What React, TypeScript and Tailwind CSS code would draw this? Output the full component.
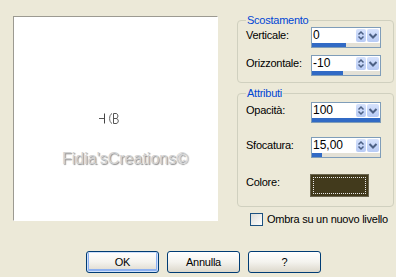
import React from "react";

function SpinBox({ value, pct }: { value: string; pct: number }) {
  return (
    <div className="w-[70px] h-[21px] border border-[#7f9db9] bg-white flex flex-col">
      <div className="flex h-[14px] items-start">
        <div className="flex-1 pl-[1px] pt-[1px] text-[12px] leading-[13px] tracking-[0px]">{value}</div>
        <div className="mt-[1px] w-[10px] h-[13px] rounded-[2px] bg-linear-to-b from-[#d6e2fc] to-[#b8cbf5]">
          <svg width="10" height="13" viewBox="0 0 10 13">
            <path d="M2.5 5.5 L5 3 L7.5 5.5" fill="none" stroke="#4d6185" strokeWidth="1.5" />
            <path d="M2.5 7.5 L5 10 L7.5 7.5" fill="none" stroke="#4d6185" strokeWidth="1.5" />
          </svg>
        </div>
        <div className="mt-[1px] ml-[1px] mr-[1px] w-[12px] h-[13px] rounded-[2px] bg-linear-to-b from-[#d6e2fc] to-[#b8cbf5]">
          <svg width="12" height="13" viewBox="0 0 12 13">
            <path d="M2.5 5 L6 8.5 L9.5 5" fill="none" stroke="#4d6185" strokeWidth="2" />
          </svg>
        </div>
      </div>
      <div className="mt-[1px] h-[4px] bg-[#e4e1d6] flex">
        <div className="h-full bg-[#316ac5]" style={{ width: `${pct}%` }} />
      </div>
    </div>
  );
}

function Row({ label, children, className = "" }: { label: string; children: React.ReactNode; className?: string }) {
  return (
    <div className={"flex items-start " + className}>
      <div className="w-[65px] pt-[2px]">{label}</div>
      {children}
    </div>
  );
}

function Group({ title, children, className = "" }: { title: string; children: React.ReactNode; className?: string }) {
  return (
    <div className={"rounded-[4px] border border-[#d0d0bf] pl-[8px] pr-[11px] " + className}>
      <div className="-mt-[7px] h-[13px] w-fit px-[1px] bg-[#ece9d8] text-[#0046d5]">{title}</div>
      {children}
    </div>
  );
}

function Btn({ label, def = false }: { label: string; def?: boolean }) {
  return (
    <button
      className={
        "w-[73px] h-[22px] rounded-[3px] border border-[#003c74] bg-linear-to-b from-white via-[#f4f3ee] to-[#dcd8cc] text-black " +
        (def ? "shadow-[inset_0_0_0_1px_#cee0fb,inset_0_-1px_0_2px_#8cb0f0]" : "")
      }
    >
      {label}
    </button>
  );
}

export default function App() {
  return (
    <div className="w-[396px] h-[277px] overflow-hidden bg-[#ece9d8] text-black text-[11px] leading-[13px] tracking-[-0.25px] font-['Liberation_Sans',Arial,sans-serif]">
      <div className="flex items-start pt-[16px] pl-[13px]">
        <div className="w-[205px] h-[205px] border-t border-l border-[#9c9a91] border-r border-b border-r-white border-b-white bg-white flex flex-col items-center">
          <svg className="mt-[96px] mr-[11px]" width="23" height="11" viewBox="0 0 23 11">
            <path d="M0 5.5 H5" stroke="#555" strokeWidth="1" />
            <path d="M5.5 0.5 V10.5" stroke="#444" strokeWidth="1" />
            <path d="M13 0.5 C9.8 2 9.8 9 13 10.5" fill="none" stroke="#666" strokeWidth="1" />
            <path d="M14.5 0.5 V10.5 M14.5 0.5 H17 C19.5 0.5 19.5 5.5 17 5.5 H14.5 M17 5.5 C20 5.5 20 10.5 17 10.5 H14.5" fill="none" stroke="#555" strokeWidth="1" />
          </svg>
          <div className="mt-[26px] ml-[19px] text-[16px] leading-[18px] tracking-[0px] text-[#d2d2d2] [text-shadow:1px_1px_1px_#8c8c8c]">
            Fidia'sCreations©
          </div>
        </div>
        <div className="ml-[19px] w-[157px] flex flex-col">
          <Group title="Scostamento" className="mt-[4px] pb-[6px]">
            <Row label="Verticale:">
              <SpinBox value="0" pct={50} />
            </Row>
            <Row label="Orizzontale:" className="mt-[7px]">
              <SpinBox value="-10" pct={45} />
            </Row>
          </Group>
          <Group title="Attributi" className="mt-[10px] pb-[9px]">
            <Row label="Opacità:" className="mt-[2px]">
              <SpinBox value="100" pct={100} />
            </Row>
            <Row label="Sfocatura:" className="mt-[14px]">
              <SpinBox value="15,00" pct={15} />
            </Row>
            <Row label="Colore:" className="mt-[16px]">
              <div className="-ml-[1px] w-[59px] h-[23px] bg-[#423a1c] border border-[#6b6650] p-[2px]">
                <div className="w-full h-full border border-dotted border-[#e8e8e8]" />
              </div>
            </Row>
          </Group>
          <div className="mt-[6px] pl-[13px] flex items-center">
            <div className="w-[13px] h-[13px] border border-[#1c5180] bg-linear-to-br from-[#dcdcd7] to-white" />
            <div className="ml-[4px]">Ombra su un nuovo livello</div>
          </div>
        </div>
      </div>
      <div className="mt-[25px] pl-[86px] flex gap-[8px]">
        <Btn label="OK" def />
        <Btn label="Annulla" />
        <Btn label="?" />
      </div>
    </div>
  );
}
